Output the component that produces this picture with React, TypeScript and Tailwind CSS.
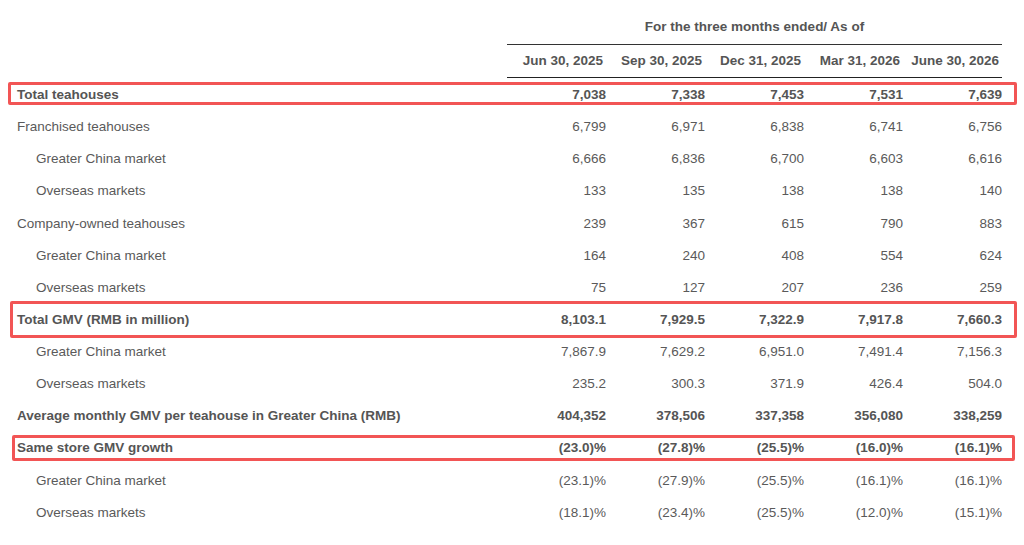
type Row = {
  label: string;
  values: string[];
  bold?: boolean;
  indent?: boolean;
  box?: string;
};

const rows: Row[] = [
  { label: "Total teahouses", values: ["7,038", "7,338", "7,453", "7,531", "7,639"], bold: true, box: "left-[8px] right-[7px] top-[3px] bottom-[6px]" },
  { label: "Franchised teahouses", values: ["6,799", "6,971", "6,838", "6,741", "6,756"] },
  { label: "Greater China market", values: ["6,666", "6,836", "6,700", "6,603", "6,616"], indent: true },
  { label: "Overseas markets", values: ["133", "135", "138", "138", "140"], indent: true },
  { label: "Company-owned teahouses", values: ["239", "367", "615", "790", "883"] },
  { label: "Greater China market", values: ["164", "240", "408", "554", "624"], indent: true },
  { label: "Overseas markets", values: ["75", "127", "207", "236", "259"], indent: true },
  { label: "Total GMV (RMB in million)", values: ["8,103.1", "7,929.5", "7,322.9", "7,917.8", "7,660.3"], bold: true, box: "left-[10px] right-[7px] -top-[3px] -bottom-[2px]" },
  { label: "Greater China market", values: ["7,867.9", "7,629.2", "6,951.0", "7,491.4", "7,156.3"], indent: true },
  { label: "Overseas markets", values: ["235.2", "300.3", "371.9", "426.4", "504.0"], indent: true },
  { label: "Average monthly GMV per teahouse in Greater China (RMB)", values: ["404,352", "378,506", "337,358", "356,080", "338,259"], bold: true },
  { label: "Same store GMV growth", values: ["(23.0)%", "(27.8)%", "(25.5)%", "(16.0)%", "(16.1)%"], bold: true, box: "left-[12px] right-[9px] top-[2px] bottom-[4px]" },
  { label: "Greater China market", values: ["(23.1)%", "(27.9)%", "(25.5)%", "(16.1)%", "(16.1)%"], indent: true },
  { label: "Overseas markets", values: ["(18.1)%", "(23.4)%", "(25.5)%", "(12.0)%", "(15.1)%"], indent: true },
];

const dates = ["Jun 30, 2025", "Sep 30, 2025", "Dec 31, 2025", "Mar 31, 2026", "June 30, 2026"];

export default function App() {
  return (
    <div className="w-[1024px] h-[545px] bg-white text-[13.5px] text-[#5a5a5a] overflow-hidden" style={{ fontFamily: '"Liberation Sans", Arial, sans-serif' }}>
      <div className="pl-[17px] pr-[22px] pt-[11px]">
        {/* Group header */}
        <div className="grid grid-cols-[1fr_495px] h-[34px]">
          <div />
          <div className="flex items-center justify-center border-b border-[#333] font-bold text-[#555]">
            For the three months ended/ As of
          </div>
        </div>

        {/* Dates */}
        <div className="grid grid-cols-[1fr_repeat(5,99px)] h-[33px]">
          <div />
          {dates.map((d) => (
            <div key={d} className="flex items-center justify-end pr-[3px] border-b border-[#222] font-bold text-[#555] whitespace-nowrap">
              {d}
            </div>
          ))}
        </div>

        {/* Body */}
        <div className="pt-[1px]">
          {rows.map((r, i) => (
            <div key={i} className={`relative grid grid-cols-[1fr_repeat(5,99px)] h-[32.15px] items-center ${r.bold ? "font-bold text-[#555]" : ""}`}>
              <div className={`whitespace-nowrap ${r.indent ? "pl-[19px]" : ""}`}>{r.label}</div>
              {r.values.map((v, j) => (
                <div key={j} className="text-right">{v}</div>
              ))}
              {r.box && (
                <div className={`absolute -ml-[17px] -mr-[22px] border-[3px] border-[#f25555] rounded-[2px] pointer-events-none ${r.box}`} />
              )}
            </div>
          ))}
        </div>
      </div>
    </div>
  );
}
